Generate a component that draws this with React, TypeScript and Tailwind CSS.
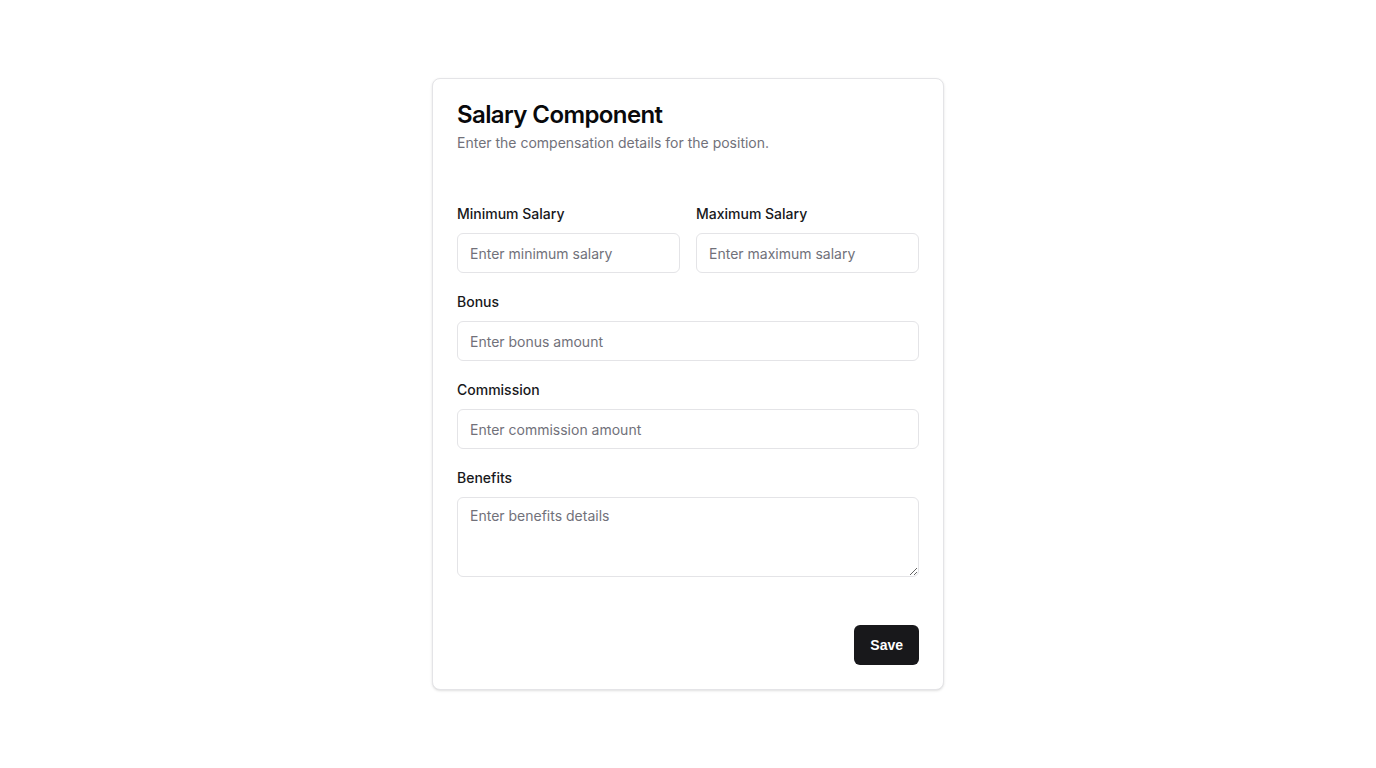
export default function App() {
  const inputCls =
    'w-full h-10 rounded-md border border-[#e4e4e7] bg-white px-3 text-sm text-[#09090b] placeholder-[#71717a] focus:outline-none';
  const labelCls = 'block text-sm leading-5 font-medium text-[#18181b] mb-[9px]';

  return (
    <div className="min-h-screen flex items-center justify-center bg-white font-['Inter',sans-serif]">
      <div className="w-[512px] rounded-lg border border-[#e4e4e7] bg-white shadow-sm">
        <div className="p-6 flex flex-col gap-1.5">
          <h2 className="text-2xl font-semibold leading-none tracking-tight text-[#09090b]">Salary Component</h2>
          <p className="text-sm leading-5 text-[#71717a]">Enter the compensation details for the position.</p>
        </div>
        <div className="px-6 pb-6 pt-[27px]">
          <div className="flex flex-col gap-[19px]">
            <div className="grid grid-cols-2 gap-4">
              <div>
                <label className={labelCls}>Minimum Salary</label>
                <input placeholder="Enter minimum salary" className={inputCls} />
              </div>
              <div>
                <label className={labelCls}>Maximum Salary</label>
                <input placeholder="Enter maximum salary" className={inputCls} />
              </div>
            </div>
            <div>
              <label className={labelCls}>Bonus</label>
              <input placeholder="Enter bonus amount" className={inputCls} />
            </div>
            <div>
              <label className={labelCls}>Commission</label>
              <input placeholder="Enter commission amount" className={inputCls} />
            </div>
            <div>
              <label className={labelCls}>Benefits</label>
              <textarea
                placeholder="Enter benefits details"
                className="block w-full h-20 rounded-md border border-[#e4e4e7] bg-white px-3 py-2 text-sm leading-5 text-[#09090b] placeholder-[#71717a] focus:outline-none"
              />
            </div>
          </div>
          <div className="flex justify-end mt-12">
            <button className="h-10 px-4 rounded-md bg-[#18181b] text-white text-sm font-semibold font-['Liberation_Sans',sans-serif]">
              Save
            </button>
          </div>
        </div>
      </div>
    </div>
  );
}
